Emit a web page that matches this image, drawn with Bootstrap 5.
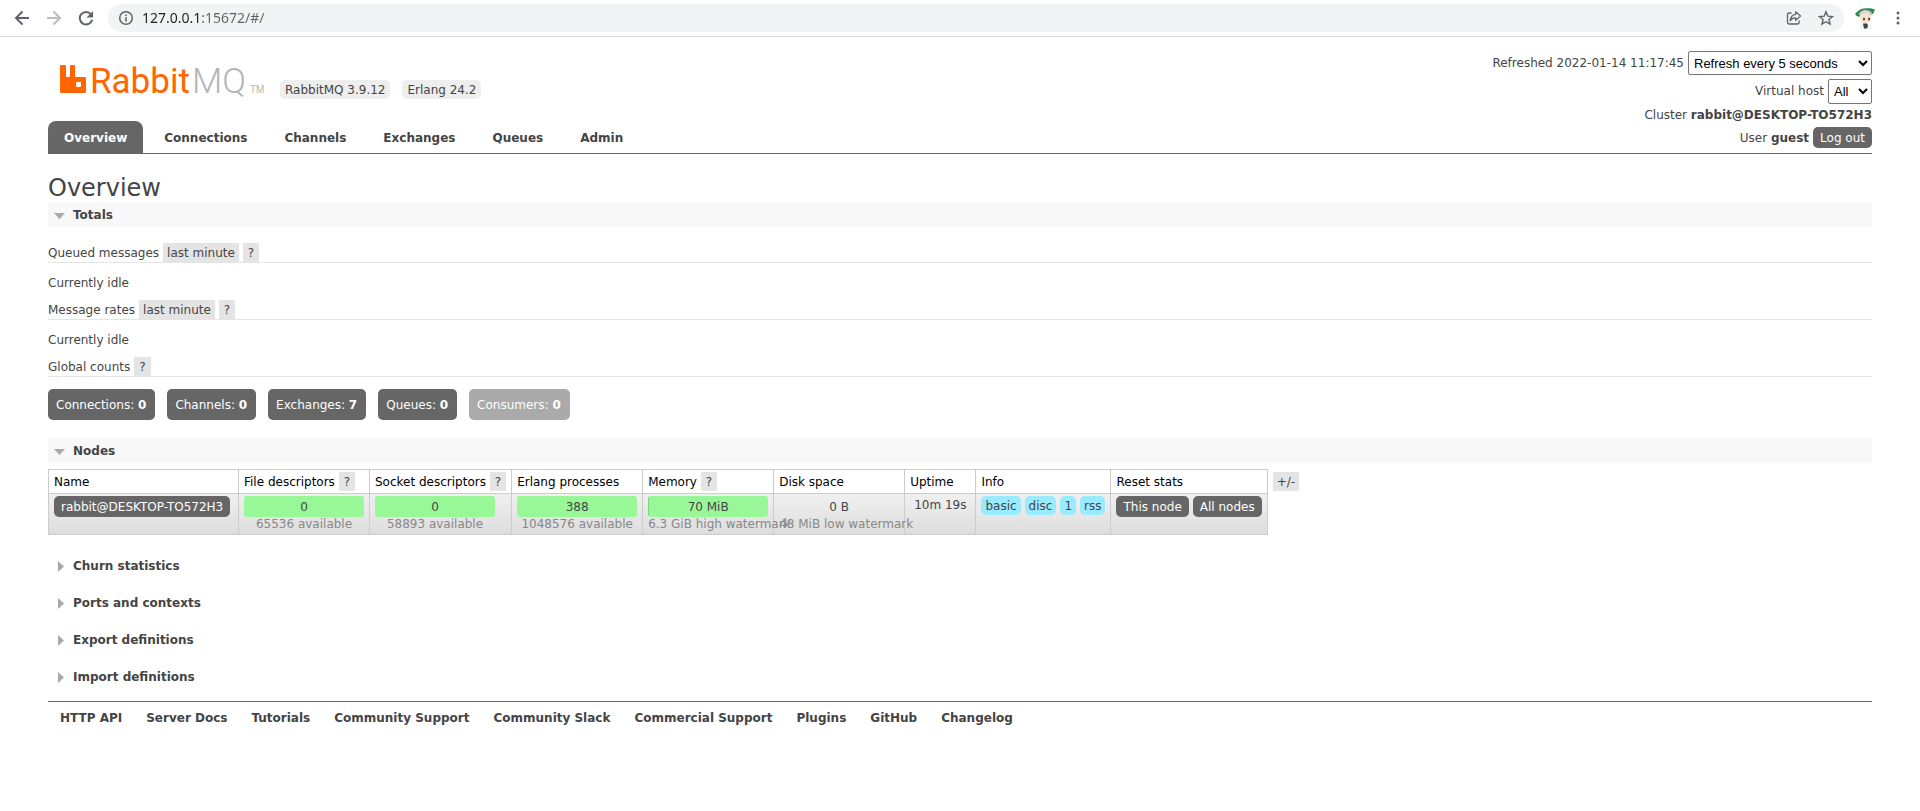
<!DOCTYPE html>
<html lang="en">
<head>
<meta charset="utf-8">
<meta name="viewport" content="width=device-width, initial-scale=1">
<title>RabbitMQ Management</title>
<link href="https://cdn.jsdelivr.net/npm/bootstrap@5.3.0/dist/css/bootstrap.min.css" rel="stylesheet">
<style>
  body { font: 12px/15px Verdana, "DejaVu Sans", sans-serif; color: #444; background: #fff; }
  b, th { font-weight: 700; }
  a { color: inherit; text-decoration: none; }
  button { font: inherit; border: 0; }

  /* browser toolbar */
  .toolbar { height: 37px; border-bottom: 1px solid #dadce0; padding: 0 14px; color: #5f6368; }
  .toolbar button { background: none; padding: 0; color: inherit; display: flex; }
  .toolbar svg { display: block; }
  .toolbar .menu { margin-left: 12px; }
  .omnibox { height: 28px; border-radius: 14px; background: #f1f3f4; padding: 0 10px; margin-left: 14px; }
  .omnibox input {
    border: 0; outline: 0; padding: 0; height: 20px; min-width: 0;
    font: 14px/20px "Segoe UI", "Noto Sans", sans-serif;
    background: linear-gradient(90deg, #202124 59px, #5f6368 59px);
    -webkit-background-clip: text; background-clip: text; -webkit-text-fill-color: transparent;
  }

  /* page header */
  .page { padding: 0 48px; }
  .masthead { border-bottom: 1px solid #666; }
  .brand { padding: 0 0 18px 12px; gap: 12px; }
  .version { background: #eee; border-radius: 5px; padding: 3px 5px 1px; margin-bottom: 4px; }
  .tabs { gap: 5px; }
  .tabs a { display: block; font-weight: 700; padding: 10px 16px 7px; border-radius: 8px 8px 0 0; }
  .tabs a.active { background: #666; color: #fff; }
  .session { padding: 14px 0 5px; gap: 4px; }
  .session select {
    height: 25px; border: 1px solid #767676; border-radius: 2px; background: #fff; color: #000;
    font: 13px/15px Arial, "Liberation Sans", sans-serif; padding: 0 1px; margin-left: 4px;
  }
  .session .interval { width: 184px; height: 24px; }
  .session .vhost { width: 44px; }

  .dark-btn { background: #666; color: #fff; border-radius: 5px; padding: 4px 7px 2px; display: inline-block; white-space: nowrap; }
  .counts { gap: 12px; margin: 12px 0 18px; }
  .count-btn { background: #666; color: #fff; border-radius: 5px; padding: 9px 9px 7px 8px; }
  .count-btn.off { background: #aaa; }

  h1 { font-size: 24px; line-height: 28px; font-weight: 400; margin: 20px 0 0; }
  .fold { display: flex; align-items: center; width: 100%; background: none; color: #444; font-weight: 700; padding: 6px 0 4px; text-align: left; }
  .fold.open { background: #f8f8f8; }
  .fold svg { width: 12px; height: 12px; margin: 0 7px 0 6px; fill: #a9a9a9; }
  .fold + .fold { margin-top: 12px; }
  .subhead { font-size: 12px; line-height: 15px; font-weight: 400; margin: 0; border-bottom: 1px solid #e4e4e4; display: flex; align-items: baseline; gap: 4px; }
  .chip { background: #e4e4e4; color: #444; padding: 3px 4px 1px; line-height: 15px; }
  .chip.help { padding: 3px 5px 1px; }
  .idle { margin: 13px 0 9px; }

  /* node table */
  .node-area { margin: 6px 0 18px; gap: 5px; }
  .node-area > .chip { margin-top: 3px; }
  .nodes { border-collapse: collapse; }
  .nodes th, .nodes td { border: 1px solid #ccc; padding: 2px 5px; vertical-align: top; white-space: nowrap; }
  .nodes th { font-weight: 400; color: #000; vertical-align: baseline; }
  .nodes th .chip { display: inline-block; }
  .nodes .name-col { min-width: 190px; }
  .nodes .uptime { padding: 4px 9px 2px; }
  .nodes tbody tr { background: linear-gradient(#f0f0f0, #ddd); }
  .meter { width: 120px; text-align: center; line-height: 19px; padding-top: 2px; border-radius: 3px; }
  .meter.ok { background: #98f898; }
  .meter.used { background: linear-gradient(90deg, #79d679 1px, #98f898 1px); }
  .limit { width: 120px; text-align: center; color: #888; }
  .tag { display: inline-block; background: #99ebff; border-radius: 5px; padding: 3px 4px 1px; }

  .links { border-top: 1px solid #666; margin-top: 12px; padding: 9px 12px; column-gap: 24px; font-weight: 700; }
</style>
</head>
<body>

<div class="toolbar d-flex align-items-center">
  <button type="button" aria-label="Back"><svg width="16" height="16" viewBox="0 0 16 16" fill="none" stroke="#5f6368" stroke-width="2"><path d="M15 8H2.500M8.500 1.500L2 8l6.500 6.500"/></svg></button>
  <button type="button" aria-label="Forward" class="ms-3"><svg width="16" height="16" viewBox="0 0 16 16" fill="none" stroke="#babcbe" stroke-width="2"><path d="M1 8h12.500M7.500 1.500L14 8l-6.500 6.500"/></svg></button>
  <button type="button" aria-label="Reload" class="ms-3"><svg width="16" height="16" viewBox="0 0 16 16"><path d="M13 4.200A6.300 6.300 0 1 0 14.200 9.800" fill="none" stroke="#5f6368" stroke-width="2"/><path d="M15 1v6.500H8.500z" fill="#5f6368"/></svg></button>
  <div class="omnibox d-flex align-items-center flex-grow-1">
    <svg width="16" height="16" viewBox="0 0 16 16"><circle cx="8" cy="8" r="6.300" fill="none" stroke="#5f6368" stroke-width="1.500"/><path d="M7.200 7.200h1.600v4.300H7.200zM7.200 4.400h1.600V6H7.200z" fill="#5f6368"/></svg>
    <input type="text" class="flex-grow-1 ms-2" aria-label="Address" value="127.0.0.1:15672/#/">
    <button type="button" aria-label="Share"><svg width="16" height="16" viewBox="0 0 16 16" fill="none" stroke="#5f6368" stroke-width="1.300" stroke-linejoin="round"><path d="M5.500 3H3.200C2.200 3 1.500 3.700 1.500 4.700v7.600c0 1 .7 1.700 1.700 1.700h8.300c1 0 1.700-.7 1.700-1.700V10.500"/><path d="M9.700 1.800L14.500 6 9.700 10.200V7.800C7.200 7.800 5.400 8.700 4.200 10.800 4.500 7.400 6.300 4.700 9.700 4.300z"/></svg></button>
    <button type="button" aria-label="Bookmark" class="ms-3"><svg width="16" height="16" viewBox="0 0 16 16" fill="none" stroke="#5f6368" stroke-width="1.400"><path d="M8 1.800l1.800 4.300 4.700.4-3.600 3 1.100 4.600L8 11.700l-4 2.400 1.100-4.600-3.600-3 4.700-.4z"/></svg></button>
  </div>
  <button type="button" aria-label="Profile" class="ms-2"><svg width="26" height="24" viewBox="0 0 26 24"><path d="M3 8C5 6 7 3 12 2.500s7-.5 11 1c-1 2-1 4-3 5L8 10.500C6 11 4 10 3 8z" fill="#2e8b57"/><path d="M7 8c1-4 9-6 13-1l-1 3H8z" fill="#c9c5b5"/><circle cx="13.500" cy="12" r="5.800" fill="#f8e3d2"/><path d="M8 9c3-2 8-2 11-1-1-4-9-5-11 1z" fill="#ddd8c8"/><ellipse cx="12" cy="13" rx="1" ry="1.500" fill="#5a3a2a"/><ellipse cx="17" cy="13" rx="1" ry="1.500" fill="#5a3a2a"/><path d="M7 21l3-3h6l5 4-4 1H9z" fill="#edf3f2"/><path d="M11 17.500h4l1 2-1 3h-3z" fill="#3c4650"/></svg></button>
  <button type="button" aria-label="Menu" class="menu"><svg width="16" height="16" viewBox="0 0 16 16" fill="#5f6368"><circle cx="8" cy="3" r="1.500"/><circle cx="8" cy="8" r="1.500"/><circle cx="8" cy="13" r="1.500"/></svg></button>
</div>

<div class="page">
  <header class="masthead d-flex justify-content-between align-items-end">
    <div>
      <div class="brand d-flex align-items-end">
        <a href="#" aria-label="RabbitMQ">
          <svg class="d-block" width="208" height="50" viewBox="0 -6 208 50">
            <path fill="#f60" fill-rule="evenodd" d="M1 6h4q1 0 1 1v10q0 1 1 1h2q1 0 1-1V7q0-1 1-1h3q1 0 1 1v10q0 1 1 1h9q1 0 1 1v14q0 1-1 1H1q-1 0-1-1V7q0-1 1-1zM17 23q-1 0-1 1v3q0 1 1 1h3q1 0 1-1v-3q0-1-1-1z"/>
            <g font-family="Roboto, sans-serif" font-size="35">
              <text x="30" y="34" fill="#f60">Rabbit</text>
              <text x="132" y="34" fill="#b5b5b5" font-weight="300">MQ</text>
            </g>
            <text x="190" y="34" fill="#b5b5b5" font-family="'Liberation Sans', Arial, sans-serif" font-size="10">TM</text>
          </svg>
        </a>
        <span class="version">RabbitMQ 3.9.12</span>
        <span class="version">Erlang 24.2</span>
      </div>
      <nav class="tabs d-flex">
        <a class="active" href="#/">Overview</a>
        <a href="#/connections">Connections</a>
        <a href="#/channels">Channels</a>
        <a href="#/exchanges">Exchanges</a>
        <a href="#/queues">Queues</a>
        <a href="#/users">Admin</a>
      </nav>
    </div>
    <div class="session d-flex flex-column align-items-end">
      <div class="d-flex align-items-center"><label for="interval">Refreshed 2022-01-14 11:17:45</label>
        <select id="interval" class="interval"><option>Refresh every 5 seconds</option></select></div>
      <div class="d-flex align-items-center"><label for="vhost">Virtual host</label>
        <select id="vhost" class="vhost"><option>All</option></select></div>
      <div>Cluster <b>rabbit@DESKTOP-TO572H3</b></div>
      <div class="d-flex align-items-baseline gap-1"><span>User <b>guest</b></span><button type="button" class="dark-btn">Log out</button></div>
    </div>
  </header>

  <main>
    <h1>Overview</h1>
    <button type="button" class="fold open" aria-expanded="true"><svg viewBox="0 0 12 12"><path d="M0 3h11L5.500 9z"/></svg>Totals</button>

    <h3 class="subhead mt-3">Queued messages <a class="chip" href="#">last minute</a><a class="chip help" href="#">?</a></h3>
    <p class="idle">Currently idle</p>
    <h3 class="subhead">Message rates <a class="chip" href="#">last minute</a><a class="chip help" href="#">?</a></h3>
    <p class="idle">Currently idle</p>
    <h3 class="subhead">Global counts <a class="chip help" href="#">?</a></h3>

    <div class="counts d-flex flex-wrap">
      <a class="count-btn" href="#/connections">Connections: <b>0</b></a>
      <a class="count-btn" href="#/channels">Channels: <b>0</b></a>
      <a class="count-btn" href="#/exchanges">Exchanges: <b>7</b></a>
      <a class="count-btn" href="#/queues">Queues: <b>0</b></a>
      <span class="count-btn off">Consumers: <b>0</b></span>
    </div>

    <button type="button" class="fold open" aria-expanded="true"><svg viewBox="0 0 12 12"><path d="M0 3h11L5.500 9z"/></svg>Nodes</button>

    <div class="node-area d-flex align-items-start">
      <table class="nodes">
        <thead>
          <tr>
            <th class="name-col">Name</th>
            <th>File descriptors <a class="chip help" href="#">?</a></th>
            <th>Socket descriptors <a class="chip help" href="#">?</a></th>
            <th>Erlang processes</th>
            <th>Memory <a class="chip help" href="#">?</a></th>
            <th>Disk space</th>
            <th>Uptime</th>
            <th>Info</th>
            <th>Reset stats</th>
          </tr>
        </thead>
        <tbody>
          <tr>
            <td><a class="dark-btn" href="#/nodes">rabbit@DESKTOP-TO572H3</a></td>
            <td><div class="meter ok">0</div><div class="limit">65536 available</div></td>
            <td><div class="meter ok">0</div><div class="limit">58893 available</div></td>
            <td><div class="meter ok">388</div><div class="limit">1048576 available</div></td>
            <td><div class="meter used">70 MiB</div><div class="limit">6.3 GiB high watermark</div></td>
            <td><div class="meter">0 B</div><div class="limit">48 MiB low watermark</div></td>
            <td class="uptime">10m 19s</td>
            <td><div class="d-flex gap-1"><span class="tag">basic</span><span class="tag">disc</span><span class="tag">1</span><span class="tag">rss</span></div></td>
            <td><div class="d-flex gap-1"><button type="button" class="dark-btn">This node</button><button type="button" class="dark-btn">All nodes</button></div></td>
          </tr>
        </tbody>
      </table>
      <a class="chip" href="#">+/-</a>
    </div>

    <div class="folds">
      <button type="button" class="fold" aria-expanded="false"><svg viewBox="0 0 12 12"><path d="M4 0v11l6-5.500z"/></svg>Churn statistics</button>
      <button type="button" class="fold" aria-expanded="false"><svg viewBox="0 0 12 12"><path d="M4 0v11l6-5.500z"/></svg>Ports and contexts</button>
      <button type="button" class="fold" aria-expanded="false"><svg viewBox="0 0 12 12"><path d="M4 0v11l6-5.500z"/></svg>Export definitions</button>
      <button type="button" class="fold" aria-expanded="false"><svg viewBox="0 0 12 12"><path d="M4 0v11l6-5.500z"/></svg>Import definitions</button>
    </div>
  </main>

  <footer class="links d-flex flex-wrap">
    <a href="#">HTTP API</a>
    <a href="#">Server Docs</a>
    <a href="#">Tutorials</a>
    <a href="#">Community Support</a>
    <a href="#">Community Slack</a>
    <a href="#">Commercial Support</a>
    <a href="#">Plugins</a>
    <a href="#">GitHub</a>
    <a href="#">Changelog</a>
  </footer>
</div>

<script src="https://cdn.jsdelivr.net/npm/bootstrap@5.3.0/dist/js/bootstrap.bundle.min.js"></script>
</body>
</html>
